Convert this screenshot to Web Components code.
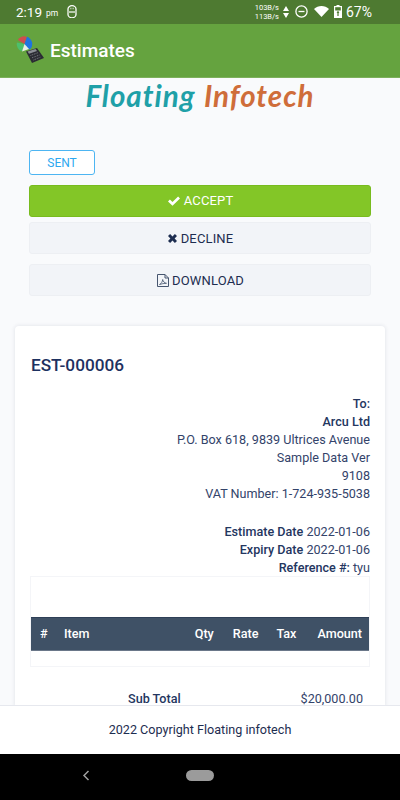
<!DOCTYPE html>
<html>
<head>
<meta charset="utf-8">
<title>Estimates</title>
<style>
  html, body { margin: 0; padding: 0; }
  body { width: 400px; height: 800px; overflow: hidden; font-family: Roboto, "Liberation Sans", sans-serif; background: #f9fafc; }
  app-shell { height: 800px; }
</style>
</head>
<body>
<app-shell>
  <status-bar slot="top"></status-bar>
  <app-bar slot="top" title="Estimates"></app-bar>
  <brand-logo></brand-logo>
  <estimate-actions></estimate-actions>
  <estimate-card></estimate-card>
  <app-footer slot="bottom"></app-footer>
  <nav-bar slot="bottom"></nav-bar>
</app-shell>

<script>
class AppShell extends HTMLElement {
  constructor() {
    super();
    this.attachShadow({ mode: 'open' }).innerHTML = `
      <style>
        :host { display: flex; flex-direction: column; width: 400px; }
        main { flex: 1; min-height: 0; overflow: hidden; background: #f9fafc; }
      </style>
      <slot name="top"></slot>
      <main><slot></slot></main>
      <slot name="bottom"></slot>`;
  }
}

class StatusBar extends HTMLElement {
  constructor() {
    super();
    this.attachShadow({ mode: 'open' }).innerHTML = `
      <style>
        :host { display: flex; align-items: center; height: 23px; background: #4e7a31; color: #fff; padding: 0 0 1px 16px; font-family: Roboto, sans-serif; }
        .time { font-size: 13.500px; }
        .ampm { font-size: 8.500px; margin-left: 4px; margin-top: 2px; }
        .sync { margin-left: 9px; display: block; }
        .right { margin-left: auto; display: flex; align-items: center; padding-right: 28px; }
        .speed { font-size: 7.500px; line-height: 9px; text-align: right; }
        .right svg { display: block; }
        .arrows { margin-left: 4px; }
        .dnd { margin-left: 6px; }
        .wifi { margin-left: 6px; }
        .batt { margin-left: 5px; }
        .pct { font-size: 14px; margin-left: 4px; }
      </style>
      <span class="time">2:19</span><span class="ampm">pm</span>
      <svg class="sync" width="10" height="13" viewBox="0 0 10 13" fill="none" stroke="#fff" stroke-width="1.300">
        <path d="M1 6V4a4 3.300 0 0 1 8 0v2M1 8v1.500a4 3.300 0 0 0 8 0V8"/>
        <path d="M0 7h10" stroke-width="1.200"/>
        <path d="M3.500 3.500h.8M5.700 3.500h.8" stroke-width="1.400"/>
      </svg>
      <div class="right">
        <div class="speed">103B/s<br>113B/s</div>
        <svg class="arrows" width="6" height="12" viewBox="0 0 6 12" fill="#fff"><path d="M3 0l3 5H0zM3 12L0 7h6z"/></svg>
        <svg class="dnd" width="13" height="13" viewBox="0 0 13 13" fill="none" stroke="#fff" stroke-width="1.300"><circle cx="6.500" cy="6.500" r="5.600"/><path d="M3.500 6.500h6"/></svg>
        <svg class="wifi" width="15" height="11" viewBox="0 0 15 11" fill="#fff"><path d="M0 3C4-1 11-1 15 3L7.500 11z"/></svg>
        <svg class="batt" width="8" height="13" viewBox="0 0 8 13"><path fill="#fff" d="M2.500 0h3v1H8v12H0V1h2.500z"/><path fill="#4e7a31" d="M1.200 2.200h5.600v3.300H1.200z"/><path fill="#4e7a31" d="M4 5.500l1.400 2.500H4.600v3H3.400V8h-.8z"/></svg>
        <span class="pct">67%</span>
      </div>`;
  }
}

class AppBar extends HTMLElement {
  constructor() {
    super();
    this.attachShadow({ mode: 'open' }).innerHTML = `
      <style>
        :host { display: flex; align-items: center; height: 54px; box-sizing: border-box; padding: 0 0 0 16px; background: #65a33f; color: #fff; border-bottom: 1px solid #7db05c; }
        svg { display: block; flex: none; margin-top: -1px; }
        h1 { margin: 0 0 0 5px; font: 500 19px Roboto, sans-serif; }
      </style>
      <svg width="29" height="29" viewBox="0 0 29 29">
        <path d="M8.500 8L1 6.500A7.700 7.700 0 0 0 6 15.500z" fill="#4cc06c"/>
        <path d="M8.500 8L2 4A7.700 7.700 0 0 1 11 .8z" fill="#cf4e4e"/>
        <path d="M8.500 8L11 .8A7.700 7.700 0 0 1 14 13.500L10 12z" fill="#1f74e0"/>
        <path d="M6 15.500L8.500 8 13 13z" fill="#e8f0e6"/>
        <path d="M10 15.500l11-3.500 7 10-12 5z" fill="#2b2b33"/>
        <path d="M11.500 15.500l8-2.500 1.500 2-8 2.700z" fill="#8d8f96"/>
        <path d="M14.500 19.500l7.500-2.800M16 21.800l7.500-2.800M17.500 24l7-2.800" stroke="#777a80" stroke-width="1" stroke-dasharray="1 .8" fill="none"/>
      </svg>
      <h1>${this.getAttribute('title')}</h1>`;
  }
}

class BrandLogo extends HTMLElement {
  constructor() {
    super();
    this.attachShadow({ mode: 'open' }).innerHTML = `
      <style>
        :host { display: block; height: 72px; text-align: center; font: italic 700 29.500px/36px Lato, "Open Sans", sans-serif; letter-spacing: 1px; word-spacing: 1px; }
        .a { color: #1fa0a8; }
        .b { color: #cf6d3a; }
      </style>
      <span class="a">Floating</span> <span class="b">Infotech</span>`;
  }
}

class EstBtn extends HTMLElement {
  constructor() {
    super();
    this.attachShadow({ mode: 'open' }).innerHTML = `
      <style>
        :host { display: flex; align-items: center; justify-content: center; gap: 4px; box-sizing: border-box; height: 32px; padding-left: 1px; border-radius: 3px; border: 1px solid #edeff3; background: #f2f4f8; color: #1d2d50; font: 13px/1 Roboto, sans-serif; letter-spacing: .15px; }
        :host([variant=accept]) { background: #83c627; border-color: #78bb1e; color: #fff; padding-bottom: 1px; }
        ::slotted(svg) { display: block; }
      </style>
      <slot></slot>`;
  }
}

class EstimateActions extends HTMLElement {
  constructor() {
    super();
    this.attachShadow({ mode: 'open' }).innerHTML = `
      <style>
        :host { display: block; padding: 0 29px; }
        .status { display: flex; align-items: center; justify-content: center; box-sizing: border-box; width: 66px; height: 25px; margin-bottom: 10px; border: 1px solid #4db5f2; border-radius: 3px; background: #fff; color: #2ea8ef; font: 12px Roboto, sans-serif; }
        est-btn { margin-bottom: 5px; }
        est-btn.dl { margin-top: 10px; margin-bottom: 30px; }
      </style>
      <div class="status">SENT</div>
      <est-btn variant="accept">
        <svg width="12" height="10" viewBox="0 0 12 10" fill="#fff"><path d="M0 5.400l1.900-1.900 2.600 2.600L10.100 .5 12 2.400 4.500 9.800z"/></svg>ACCEPT
      </est-btn>
      <est-btn>
        <svg width="9" height="9" viewBox="0 0 9 9" fill="#1d2d50"><path d="M2.100 0L4.500 2.400 6.900 0 9 2.100 6.600 4.500 9 6.900 6.900 9 4.500 6.600 2.100 9 0 6.900 2.400 4.500 0 2.100z"/></svg>DECLINE
      </est-btn>
      <est-btn class="dl">
        <svg width="12" height="13" viewBox="0 0 12 13" fill="none" stroke="#46556f" stroke-width="1" style="margin-right:-1px"><path d="M.5.5h7.500l3.500 3.500v8.500H.5z"/><path d="M8 .5V4h3.500"/><path d="M2.500 10.500C4.500 9.500 5.500 7.500 5.700 5.500c.3 2 1.800 3.500 3.800 3.800-2.300 0-5 .5-7 1.200z" stroke-width=".8"/></svg>DOWNLOAD
      </est-btn>`;
  }
}

class EstimateCard extends HTMLElement {
  constructor() {
    super();
    this.attachShadow({ mode: 'open' }).innerHTML = `
      <style>
        :host { display: block; box-sizing: border-box; margin: 0 15px; padding: 28px 15px 0; background: #fff; border-radius: 4px; box-shadow: 0 0 4px rgba(30,40,70,.12); color: #1d2d50; font: 12.600px/18px Roboto, sans-serif; }
        h2 { margin: 0 0 19px 1px; font: 500 17.200px/22px Roboto, sans-serif; color: #1d3160; }
        .to { text-align: right; color: #33436a; }
        .to b, .dates b { font-weight: 500; color: #24365f; }
        .dates { margin-top: 20px; text-align: right; color: #33436a; height: 27px; }
        .wrap { margin-top: 26px; height: 91px; box-sizing: border-box; padding-top: 40px; border: 1px solid #f4f5f8; }
        .head { display: grid; grid-template-columns: 33px 1fr auto auto auto auto; align-items: center; height: 34px; background: #3f5166; border-top: 1px solid #2e3f57; border-bottom: 1px solid #6a7789; box-sizing: border-box; color: #fff; font-weight: 500; }
        .head span:first-child { padding-left: 9px; }
        .qty { padding-right: 19px; }
        .rate { padding-right: 18px; }
        .tax { padding-right: 21px; }
        .amt { padding-right: 7px; }
        .sub { display: flex; margin-top: 23px; padding: 0 7px 0 98px; justify-content: space-between; color: #24365f; font-weight: 500; }
        .sub span:last-child { font-weight: 400; color: #33436a; }
      </style>
      <h2>EST-000006</h2>
      <div class="to">
        <b>To:</b><br><b>Arcu Ltd</b><br>
        P.O. Box 618, 9839 Ultrices Avenue<br>
        Sample Data Ver<br>
        9108<br>
        VAT Number: 1-724-935-5038
      </div>
      <div class="dates">
        <b>Estimate Date</b> 2022-01-06<br>
        <b>Expiry Date</b> 2022-01-06<br>
        <b>Reference #:</b> tyu
      </div>
      <div class="wrap">
        <div class="head">
          <span>#</span><span>Item</span><span class="qty">Qty</span><span class="rate">Rate</span><span class="tax">Tax</span><span class="amt">Amount</span>
        </div>
      </div>
      <div class="sub"><span>Sub Total</span><span>$20,000.00</span></div>`;
  }
}

class AppFooter extends HTMLElement {
  constructor() {
    super();
    this.attachShadow({ mode: 'open' }).innerHTML = `
      <style>
        :host { display: flex; align-items: center; justify-content: center; box-sizing: border-box; height: 49px; padding-bottom: 2px; background: #fff; border-top: 1px solid #e6e8ee; color: #1d2d50; font: 12.600px Roboto, sans-serif; }
      </style>
      2022 Copyright Floating infotech`;
  }
}

class NavBar extends HTMLElement {
  constructor() {
    super();
    this.attachShadow({ mode: 'open' }).innerHTML = `
      <style>
        :host { display: flex; align-items: center; height: 46px; background: #000; padding: 0 0 0 82px; }
        svg { display: block; margin-top: -3px; }
        i { display: block; width: 28px; height: 11px; margin: -3px 0 0 96px; border-radius: 6px; background: #9b9b9b; }
      </style>
      <svg width="8" height="11" viewBox="0 0 8 11" fill="none" stroke="#a0a0a0" stroke-width="1.500"><path d="M6.500 1L2 5.500 6.500 10"/></svg>
      <i></i>`;
  }
}

customElements.define('app-shell', AppShell);
customElements.define('status-bar', StatusBar);
customElements.define('app-bar', AppBar);
customElements.define('brand-logo', BrandLogo);
customElements.define('est-btn', EstBtn);
customElements.define('estimate-actions', EstimateActions);
customElements.define('estimate-card', EstimateCard);
customElements.define('app-footer', AppFooter);
customElements.define('nav-bar', NavBar);
</script>
</body>
</html>
